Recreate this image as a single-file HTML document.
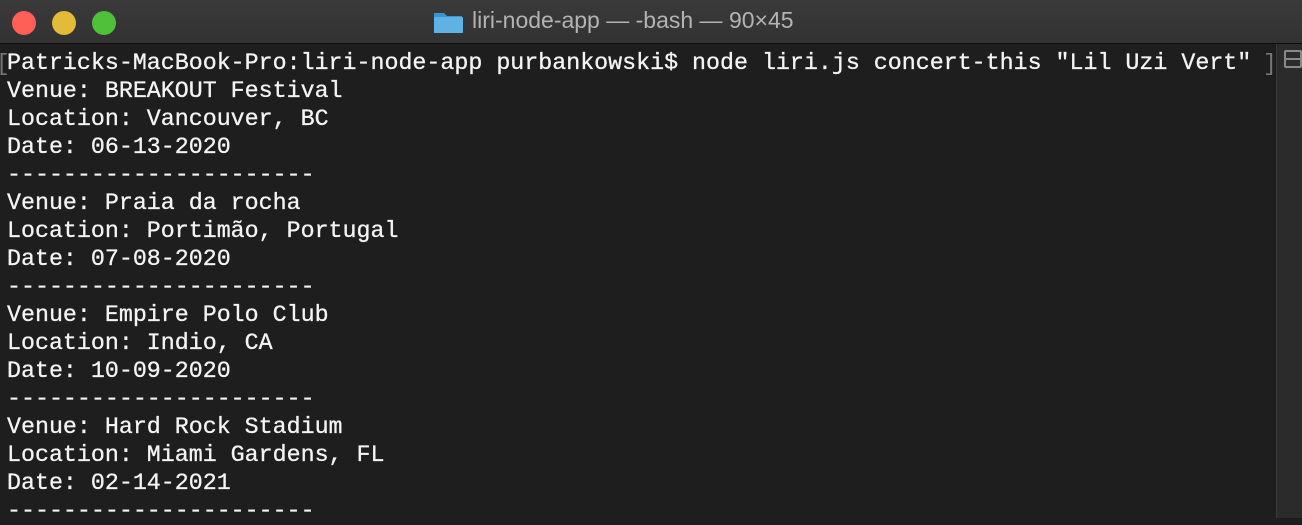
<!DOCTYPE html>
<html><head><style>
body{margin:0;width:1302px;height:518px;overflow:hidden;background:#1e1e1e;position:relative}
.tb{position:absolute;left:0;top:0;width:1302px;height:43px;background:linear-gradient(#3b3a3b,#333233);border-bottom:1px solid #0e0e0e}
.d{position:absolute;top:11px;width:24px;height:24px;border-radius:50%}
.title{position:absolute;left:472px;top:7px;font:23px "Liberation Sans",sans-serif;color:#b3b3b3;white-space:nowrap}
.folder{position:absolute;left:433px;top:10px;width:30px;height:24px}
pre{position:absolute;left:7px;top:49px;margin:0;font:23.3px/28px "Liberation Mono",monospace;color:#f4f4f4;-webkit-text-stroke:0.3px #f4f4f4}
.sb{position:absolute;left:1276px;top:44px;width:26px;height:474px;background:#2b2b2b;border-left:1px solid #3a3a3a}
.sbi{position:absolute;left:1284px;top:50px;width:14px;height:14px;border:2px solid #8a8a8a;border-radius:2px}
.sbi:after{content:"";position:absolute;left:0;top:6px;width:14px;height:2px;background:#8a8a8a}
.br{position:absolute;left:1263px;top:51px;font:23px "Liberation Mono",monospace;color:#777}
.bl{position:absolute;left:-4px;top:51px;font:23px "Liberation Mono",monospace;color:#777}
</style></head><body>
<div class="tb">
<div class="d" style="left:12px;background:#fe5f57"></div>
<div class="d" style="left:52px;background:#e4bb38"></div>
<div class="d" style="left:92px;background:#4fc03a"></div>
<svg class="folder" viewBox="0 0 30 24"><path d="M1 3h10l3 3h15v17H1z" fill="#3d93cf"/><rect x="1" y="7" width="29" height="16" rx="1" fill="#5fb2e4"/></svg>
<div class="title">liri-node-app — -bash — 90×45</div>
</div>
<div class="bl">[</div>
<pre>Patricks-MacBook-Pro:liri-node-app purbankowski$ node liri.js concert-this "Lil Uzi Vert"
Venue: BREAKOUT Festival
Location: Vancouver, BC
Date: 06-13-2020
----------------------
Venue: Praia da rocha
Location: Portimão, Portugal
Date: 07-08-2020
----------------------
Venue: Empire Polo Club
Location: Indio, CA
Date: 10-09-2020
----------------------
Venue: Hard Rock Stadium
Location: Miami Gardens, FL
Date: 02-14-2021
----------------------</pre>
<div class="br">]</div>
<div class="sb"></div>
<div class="sbi"></div>
</body></html>
